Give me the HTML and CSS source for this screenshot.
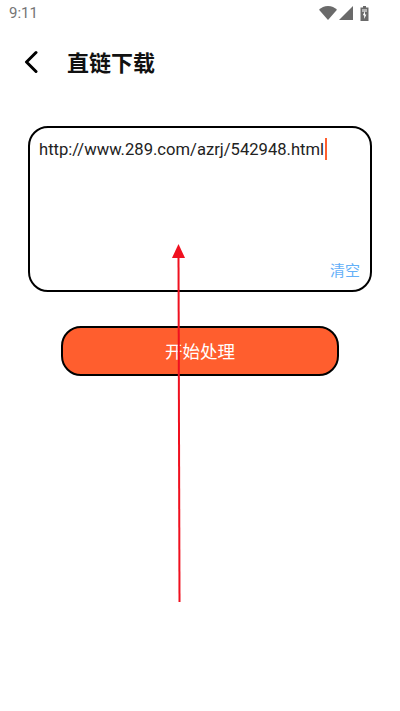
FILE: index.html
```html
<!DOCTYPE html>
<html lang="zh-CN">
<head>
<meta charset="utf-8">
<title>直链下载</title>
<link rel="stylesheet" href="styles.css">
</head>
<body>
<div class="page">
  <div class="status-bar">
    <span class="time">9:11</span>
    <div class="status-icons">
      <svg class="ic-wifi" width="18" height="14" viewBox="0 0 18 14"><path d="M0 3.700C2.300 1.500 5.400 0 9 0s6.700 1.500 9 3.700L9 14z" fill="#6a6a6a"/></svg>
      <svg class="ic-signal" width="14" height="14" viewBox="0 0 14 14"><path d="M14 0v14H0z" fill="#6a6a6a"/></svg>
      <svg class="ic-batt" width="9" height="15" viewBox="0 0 9 15"><path d="M3 0h3v1.500h2.500V15H.5V1.500H3z" fill="#6a6a6a"/><path d="M2 3h5v3H2z" fill="#b5b5b5"/><path d="M5 5 2.800 9.200h1.400V13l2.200-4.600H5z" fill="#fff"/></svg>
    </div>
  </div>
  <header class="top-bar">
    <svg class="back" width="14" height="24" viewBox="0 0 14 24"><path d="M12 2.500 2.500 12 12 21.500" fill="none" stroke="#000" stroke-width="3" stroke-linecap="round" stroke-linejoin="round"/></svg>
    <h1 class="title">直链下载</h1>
  </header>
  <section class="input-box">
    <div class="url-line"><span class="url">http://www.289.com/azrj/542948.html</span><span class="caret"></span></div>
    <div class="clear">清空</div>
  </section>
  <button class="start" type="button">开始处理</button>
  <svg class="arrow" width="20" height="362" viewBox="0 0 20 362"><path d="M9.500 12 10.500 358" stroke="#f0101f" stroke-width="2" fill="none"/><path d="M9.500 0 16 14H3z" fill="#f0101f"/></svg>
</div>
</body>
</html>
```
FILE: styles.css
```css
html, body { margin: 0; padding: 0; background: #fff; }
.page {
  position: relative;
  width: 400px;
  height: 711px;
  overflow: hidden;
  font-family: Roboto, "Noto Sans CJK SC", sans-serif;
}
.status-bar {
  display: flex;
  align-items: center;
  justify-content: space-between;
  height: 26px;
  padding: 0 31px 0 9px;
}
.time { font-size: 15px; color: #757575; }
.status-icons { display: flex; align-items: center; gap: 2px; }
.ic-batt { margin-left: 5px; }
.top-bar {
  display: flex;
  align-items: center;
  height: 72px;
  padding-left: 24px;
  gap: 30px;
}
.back { display: block; }
.title {
  margin: 0 0 3px -1px;
  font-size: 22px;
  font-weight: 700;
  color: #111;
  font-family: "Noto Sans CJK SC", sans-serif;
}
.input-box {
  display: flex;
  flex-direction: column;
  justify-content: space-between;
  box-sizing: border-box;
  width: 344px;
  height: 166px;
  margin: 28px 0 0 28px;
  padding: 9px 10px 10px 9px;
  border: 2px solid #000;
  border-radius: 20px;
}
.url-line { display: flex; align-items: center; height: 23px; }
.url { font-size: 16.6px; line-height: 23px; padding-top: 2px; color: #222; white-space: nowrap; }
.caret { width: 2px; height: 22px; background: #ff5e2e; margin-left: 1px; }
.clear {
  align-self: flex-end;
  font-size: 15px;
  line-height: 20px;
  color: #64b0f8;
  font-family: "Noto Sans CJK SC", sans-serif;
}
.start {
  display: block;
  box-sizing: border-box;
  width: 278px;
  height: 50px;
  margin: 34px 0 0 61px;
  padding: 0 0 2px;
  border: 2px solid #000;
  border-radius: 20px;
  background: #ff5e2e;
  color: #fff;
  font-size: 17.5px;
  font-family: "Noto Sans CJK SC", sans-serif;
}
.arrow { position: absolute; left: 169px; top: 244px; }
```
